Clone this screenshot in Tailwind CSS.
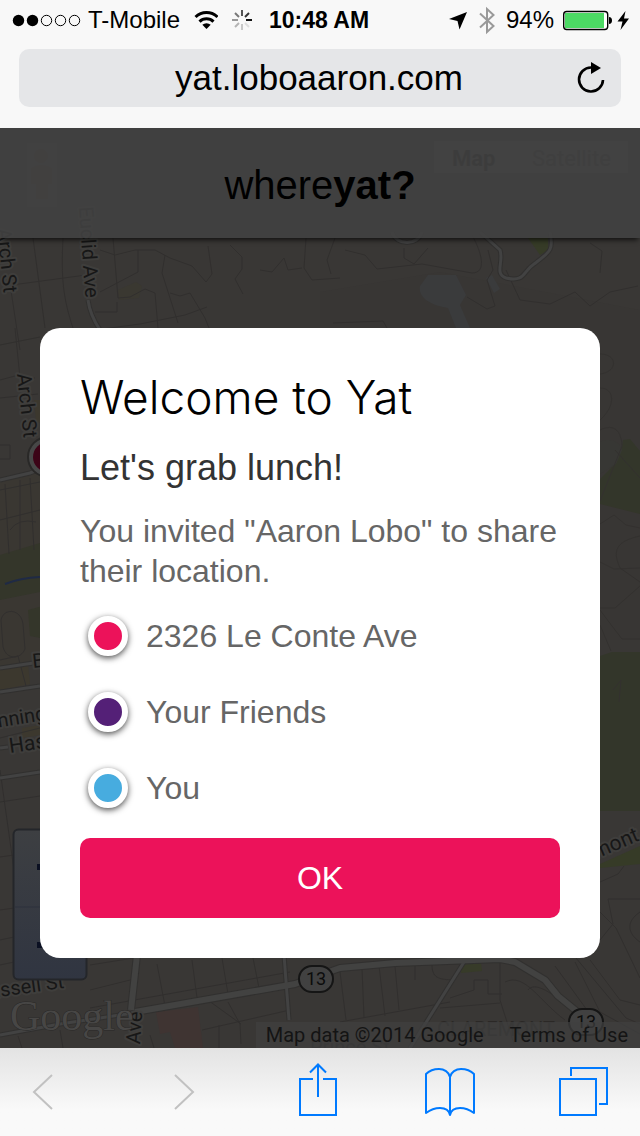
<!DOCTYPE html>
<html lang="en">
<head>
<meta charset="utf-8">
<meta name="viewport" content="width=device-width, initial-scale=1">
<title>whereyat?</title>
<script src="https://cdn.jsdelivr.net/npm/@tailwindcss/browser@4"></script>
</head>
<body class="flex min-h-screen flex-col bg-[#f8f8f8] font-['Liberation_Sans',Arial,sans-serif] text-black">

<header class="pb-[21px]">
  <div class="grid h-10 grid-cols-[1fr_auto_1fr] items-center pl-2 pr-[10px] text-[24px] leading-10">
    <div class="flex items-center pl-1">
      <svg class="h-10 w-[69px]" viewBox="12 0 69 40" role="img" aria-label="Signal: 2 of 5">
        <circle cx="18.5" cy="20.5" r="5.7"/><circle cx="32.5" cy="20.5" r="5.7"/>
        <g fill="none" stroke="#000"><circle cx="46.5" cy="20.5" r="5.2"/><circle cx="60.5" cy="20.5" r="5.2"/><circle cx="74.5" cy="20.5" r="5.2"/></g>
      </svg>
      <span class="ml-[7px] h-10">T-Mobile</span>
      <svg class="ml-[14px] h-10 w-6" viewBox="194 0 24 40" role="img" aria-label="Wi-Fi">
        <g fill="none" stroke="#000" stroke-width="3"><path d="M195.5 17a16 16 0 0 1 22 0"/><path d="M199.5 21.6a10 10 0 0 1 14 0"/></g>
        <path d="M202.3 24.8a6.4 6.4 0 0 1 8.4 0L206.500 29z"/>
      </svg>
      <svg class="ml-3 h-10 w-6" viewBox="230 0 24 40" role="img" aria-label="Loading" fill="none" stroke-width="2">
        <path stroke="#555" d="M242 10v6"/><path stroke="#333" d="M249 13l-4 4"/><path stroke="#111" d="M252 20h-6"/><path stroke="#ddd" d="M249 27l-4-4"/><path stroke="#c8c8c8" d="M242 30v-6"/><path stroke="#b4b4b4" d="M235 27l4-4"/><path stroke="#999" d="M232 20h6"/><path stroke="#777" d="M235 13l4 4"/>
      </svg>
    </div>
    <time class="h-10 text-[23px] font-bold">10:48 AM</time>
    <div class="flex items-center justify-end">
      <svg class="h-10 w-5" viewBox="447 0 20 40" role="img" aria-label="Location in use"><path d="M466 12 458.500 29.500 456.500 21 448 19z"/></svg>
      <svg class="ml-[10px] h-10 w-[18px]" viewBox="477 0 18 40" role="img" aria-label="Bluetooth" fill="none" stroke="#999" stroke-width="2"><path d="M479 13.500 492.500 26 486 32V9l6.500 6L479 27.500"/></svg>
      <span class="ml-[10px] h-10">94%</span>
      <svg class="ml-[9px] h-10 w-[50px]" viewBox="564 0 50 40" role="img" aria-label="Battery charging, 94%"><rect x="564.700" y="11.500" width="44" height="18" rx="3" fill="#fff" stroke="#000" stroke-width="1.400"/><rect x="566" y="13" width="39" height="15" fill="#4cd964"/><path d="M610 17c2 0 3 1.500 3 3.500s-1 3.500-3 3.500z"/></svg>
      <svg class="ml-1 h-10 w-[13px]" viewBox="618 0 13 40" aria-hidden="true"><path d="M626.500 11 618.500 21.500h5L621.500 30 630 18.500h-5z"/></svg>
    </div>
  </div>
  <form class="mx-[19px] mt-[9px] flex h-[58px] items-center rounded-[10px] bg-[#e5e6e8] pl-[48px] pr-[10px]">
    <input class="h-full min-w-0 flex-1 bg-transparent text-center text-[35px] outline-none" type="text" value="yat.loboaaron.com" aria-label="Address">
    <button class="h-full w-10" type="button" aria-label="Reload">
      <svg class="h-[58px] w-10" viewBox="0 0 40 58"><path d="M32 31A12 12 0 1 1 20 18.500" fill="none" stroke="#000" stroke-width="2.600"/><path d="M20 13 30 19 20 25z"/></svg>
    </button>
  </form>
</header>

<main class="relative isolate flex flex-1 flex-col bg-[#383634]">
  <svg class="absolute inset-0 -z-10 h-full w-full" viewBox="0 128 640 920" preserveAspectRatio="xMidYMid slice" aria-hidden="true" font-family="Roboto, sans-serif">
    <rect y="128" width="640" height="920" fill="#393735"/>
    <!-- areas -->
    <path fill="#383634" d="M320 292 440 272 640 310V640H320z"/>
    <path fill="#3a3732" d="M0 478 50 468V660L0 668z"/>
    <path fill="#34362a" d="M0 555 50 540V590L0 600zM28 610 50 604V640L30 636z"/>
    <path fill="#3c382e" d="M0 668 28 663 30 684 0 690zM22 728l18-3v10l-18 3zM34 400l10 0v25l-8-4z"/>
    <path fill="#33362a" d="M600 479 614 465 622 448 623 440 630 439 640 451V514L600 504zM600 656 612 652H640V811H600z"/>
    <path fill="#363b27" d="M600 864 640 846V864L600 868zM528 238H548L548 250 540 255z"/>
    <path fill="#373734" d="M600 442c8-4 19-2 22 8l-6 14-16 10z"/>
    <path fill="#3a3b3c" d="M428 275h28l10 20-6 10 10 23h-14l-8-20c-20-3-30-12-28-22zM486 278l6-3 8 14-6 4z"/>
    <path fill="#373b29" d="M461 965l20-2 1 8-21 2z"/>
    <path fill="#3f3432" d="M156 1012l42-5 5 41h-28l-5-16-10 2z"/>
    <path fill="#3a3831" d="M118 290l18-8 6 4-3 12-20 2z"/>
    <!-- minor streets -->
    <g fill="none" stroke="#312f2e" stroke-width="1">
      <path d="M33 238 45 328M10 284 20 350M12 285 86 275M63 238c-2 40 0 60 10 90M113 238l5 60 12-1 15-8 10 4 3 35M100 250l15 5 20-5 20 0 15 8 22 8 14 16 6-8-4-28M138 250v22l-38 20M165 255l-3 18 16 50M95 312h22v-10M80 332l60-8 45-9 22-8M170 293l10 3 10-3 15 25 4 10M230 245l12 12v12l-7 10 8 15M260 270l12 2 12-14 4 12 14-2M306 238l-2 30 8 12 28-2"/>
      <path d="M335 238l-8 22 4 14M345 250l20 5 12 14 45-5 50 9c15 0 10-20 0-38M404 248v10l10 6 14-16M488 250l5 20-6 10 8 26-8 3-20-12M506 270l14 30 30 4 25-12 15 14 20-14 28-6M590 243l12 8-2 22M333 323l50-2 4 7"/>
      <path d="M0 345l40-8M15 328l5 50M0 380l15-4 20 2M0 398h0l38-4M0 445h10v14H0M0 490l40-8M5 484l4 70M20 480v70M30 478l4 72M0 520l40-10M10 530q8-12 26-8M0 660l18-4M18 656l8 30M1 620c2-12 20-12 22 4l2 25c-4 10-18 12-22-2z"/>
      <path stroke="#33312f" d="M600 354c18 0 18 18 0 20M600 388c15 0 16 18 0 32M600 430c10-5 21-4 22 16l-22 55M615 450l25 28M600 524l14-9 12 10 14 3M640 536c-28 6-26 18-20 32l20 14M600 562l14 7 26-1M600 608h15l25-22M600 610l12 16 10 13h18M600 625l11 26M613 690l8-10-2 22"/>
      <path d="M0 738l40-10M0 802l40-6M0 857l14-2M0 910l14-2M0 940l14-3M0 770l14 100M0 965l14-3"/>
      <path d="M90 965l50-8M90 990l44-11M157 964l8 42M192 960l5 38M222 958l6 36M253 958l6 30M90 1008l200-36M60 1030l3 18M150 1035l4 13M18 1036l4 12M202 1030l88-20M228 1002l12 22 1 20M219 1025v23M205 998l36 26"/>
      <path d="M340 972l6 48M362 968l2 50M379 966l6 50M395 966l4 44M415 960v20M340 1022l110-20M440 1008l60-5M432 965c0 15 10 14 20 15M450 998l24-8v-10h14v14h14M500 960v40l14 44M505 982c20-10 35 20 60 38M528 990c6-8 20 0 40 16M575 962l25 50 40 22M555 966l40 55M590 960l30 40 20 5"/>
      <path d="M600 882l18-8 6-8M640 899h-32l5 25-13 16M640 912c-15 10-12 22 0 30M600 912l16 16 24 50M576 958l50 60 14 6"/>
    </g>
    <!-- main roads -->
    <g fill="none" stroke="#31302f" stroke-linejoin="round">
      <path stroke-width="5" d="M88 300q2 15 12 30M392 232c4 14 26 14 30 0M480 232l20 18c4 12-6 24 6 28 20 4 16-6 28-14 16-12 20-14 16-32M0 480l30-7 10-4M0 668l40-6M0 692l40-6M0 778l40-6M0 748l8-1M0 1035 60 1024 140 1012M284 955l5 65M464 962 410 1048"/>
      <path stroke-width="8" d="M135 1012 295 984 340 968 395 963 500 959 515 962 545 980 558 996 580 1014M137 955l-6 55"/>
      <path stroke="#424242" stroke-width="3" d="M88 300q2 15 12 30M392 232c4 14 26 14 30 0M480 232l20 18c4 12-6 24 6 28 20 4 16-6 28-14 16-12 20-14 16-32M0 480l30-7 10-4M0 668l40-6M0 692l40-6M0 778l40-6M0 748l8-1M0 1035 60 1024 140 1012M284 955l5 65M464 962 410 1048"/>
      <path stroke="#424241" stroke-width="6" d="M135 1012 295 984 340 968 395 963 500 959 515 962 545 980 558 996 580 1014M137 955l-6 55"/>
      <path stroke="#1f2a45" stroke-width="2" d="M5 584q15-6 35-7"/>
    </g>
    <!-- controls and names below the title bar -->
    <rect x="26" y="142" width="32" height="66" rx="3" fill="#3c3f44" stroke="#333"/>
    <rect x="434" y="141" width="194" height="32" fill="#464646"/>
    <path fill="#40352c" d="M41 149a7 7 0 1 1-.1 0zM31 168q10-6 21 0v16h-4v15H36v-15h-5z"/>
    <g font-size="22"><text x="452" y="166" font-weight="bold" fill="#111">Map</text><text x="532" y="166" fill="#282828">Satellite</text></g>
    <!-- street names -->
    <g font-size="20" fill="#171717" stroke="#3f3e3c" stroke-width="4" paint-order="stroke" stroke-linejoin="round">
      <text transform="translate(-3 229) rotate(84)">Arch St</text>
      <text transform="translate(79 207) rotate(86)">Euclid Ave</text>
      <text transform="translate(17 374) rotate(84)">Arch St</text>
      <text transform="translate(33 668) rotate(-6)">Blake St</text>
      <text transform="translate(-36 733) rotate(-9)">Channing Way</text>
      <text transform="translate(10 753) rotate(-8)" font-size="21">Haste St</text>
      <text transform="translate(-22 1000) rotate(-8)">Russell St</text>
      <text transform="translate(135 1116) rotate(-86)">College Ave</text>
      <text transform="translate(551 878) rotate(-23)" font-size="21">Claremont</text>
    </g>
    <text x="437" y="1036" font-size="20" fill="#2b2826">CLAREMONT</text>
    <text x="310" y="1054" font-size="20" fill="#2b2a29">Prince St</text>
    <!-- route shields -->
    <g fill="#414141" stroke="#151515" stroke-width="2"><rect x="299" y="966" width="34" height="26" rx="13"/><rect x="569" y="1009" width="34" height="26" rx="13"/></g>
    <g font-size="18" fill="#0c0c0c" text-anchor="middle"><text x="316" y="985">13</text><text x="586" y="1028">13</text></g>
    <!-- place pin -->
    <circle cx="48" cy="457" r="20" fill="#474747" stroke="#292827" stroke-width="2"/><circle cx="48" cy="457" r="15" fill="#3c0417"/>
    <text x="10" y="1030" font-size="42" font-family="Liberation Serif, serif" fill="#474645" stroke="#292827" stroke-width="1" paint-order="stroke">Google</text>
    <!-- zoom control -->
    <defs><linearGradient id="zoom" x2="0" y2="1"><stop stop-color="#3d3f42"/><stop offset="1" stop-color="#303541"/></linearGradient></defs>
    <rect x="13.500" y="829.500" width="73" height="150" rx="5" fill="url(#zoom)" stroke="#24262a" stroke-width="2"/>
    <path stroke="#2d313c" d="M15 907h71"/><path fill="#0b1022" d="M37 864h26v6H37zM37 942h26v6H37z"/>
  </svg>

  <div class="flex h-[110px] items-center justify-center bg-[#414141]/90 pt-1 shadow-[0_4px_5px_-2px_rgba(0,0,0,0.7)]">
    <p class="text-[40px] leading-12">where<b>yat?</b></p>
  </div>

  <section role="dialog" aria-labelledby="welcome" class="mx-10 mt-[90px] flex flex-col rounded-[20px] bg-white p-10">
    <h1 id="welcome" class="font-['Inter','Liberation_Sans',sans-serif] text-[46px] font-light leading-[58px]">Welcome to Yat</h1>
    <h2 class="mt-[18px] text-[36px] leading-12 text-[#333]">Let's grab lunch!</h2>
    <p class="mt-[19px] text-[32px] leading-10 text-[#666]">You invited "Aaron Lobo" to share their location.</p>
    <ul class="mt-[25px] flex flex-col gap-9 text-[32px] leading-10 text-[#666]">
      <li class="flex items-center gap-[18px] pl-2"><span class="size-10 rounded-full border-6 border-white bg-[#ec125a] shadow-[0_2px_6px_rgba(0,0,0,0.7)]"></span>2326 Le Conte Ave</li>
      <li class="flex items-center gap-[18px] pl-2"><span class="size-10 rounded-full border-6 border-white bg-[#542077] shadow-[0_2px_6px_rgba(0,0,0,0.7)]"></span>Your Friends</li>
      <li class="flex items-center gap-[18px] pl-2"><span class="size-10 rounded-full border-6 border-white bg-[#47acdf] shadow-[0_2px_6px_rgba(0,0,0,0.7)]"></span>You</li>
    </ul>
    <button type="button" class="mt-[30px] h-20 rounded-[10px] bg-[#ec125a] text-[32px] text-white">OK</button>
  </section>

  <div class="mt-auto flex h-[26px] items-center gap-[26px] self-end bg-[#404040]/70 pl-[10px] pr-3 font-['Roboto',sans-serif] text-[20px] leading-6 text-[#141414]">
    <span>Map data ©2014 Google</span>
    <a href="#terms">Terms of Use</a>
  </div>
</main>

<nav aria-label="Browser" class="flex h-22 justify-between bg-linear-to-b from-[#e3e3e3] to-[#f9f9f9] to-70% pl-[11px] pr-[25px] text-[#007aff]">
  <button type="button" disabled aria-label="Back" class="mr-2 w-16 text-[#c1c1c1]"><svg class="h-22 w-16" viewBox="0 0 64 88" fill="none" stroke="currentColor" stroke-width="2"><path d="M41 27 23 44 41 61"/></svg></button>
  <button type="button" disabled aria-label="Forward" class="w-16 text-[#c1c1c1]"><svg class="h-22 w-16" viewBox="0 0 64 88" fill="none" stroke="currentColor" stroke-width="2"><path d="M23 27 41 44 23 61"/></svg></button>
  <button type="button" aria-label="Share" class="w-16"><svg class="h-22 w-16" viewBox="0 0 64 88" fill="none" stroke="currentColor" stroke-width="2"><path d="M28 31H15V67H51V31H38M33 49V17M25 24.500 33 16.500 41 24.500"/></svg></button>
  <button type="button" aria-label="Bookmarks" class="w-16"><svg class="h-22 w-16" viewBox="0 0 64 88" fill="none" stroke="currentColor" stroke-width="2" stroke-linejoin="round"><path d="M32 67V29C31 24 26 21 21 21 16 21 11 23 8 26V65C12 62 17 60 22 60 27 60 31 62 32 67 33 62 37 60 42 60 47 60 52 62 56 65V26C53 23 48 21 43 21 38 21 33 24 32 29"/></svg></button>
  <button type="button" aria-label="Tabs" class="w-16"><svg class="h-22 w-16" viewBox="0 0 64 88" fill="none" stroke="currentColor" stroke-width="2"><path d="M9 31H45V67H9zM20 28V20H56V56H48"/></svg></button>
</nav>
</body>
</html>
